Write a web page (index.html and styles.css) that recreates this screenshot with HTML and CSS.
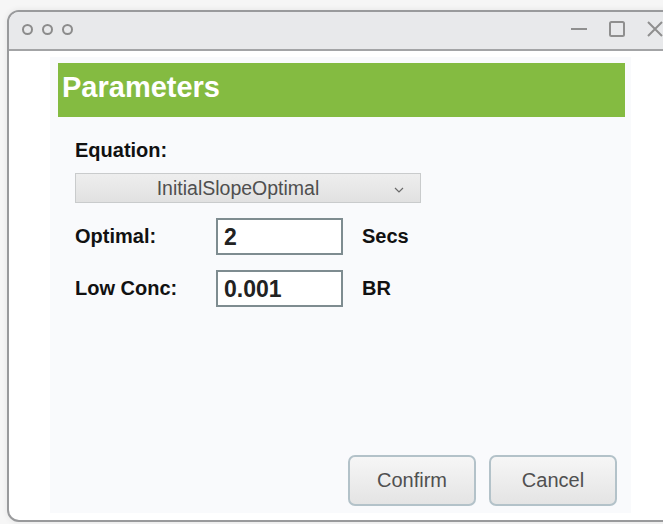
FILE: index.html
```html
<!DOCTYPE html>
<html>
<head>
<meta charset="utf-8">
<link rel="stylesheet" href="styles.css">
</head>
<body>
<div class="window">
  <div class="titlebar">
    <div class="dots">
      <span class="dot"></span><span class="dot"></span><span class="dot"></span>
    </div>
    <div class="controls">
      <svg class="ctl" width="16" height="16" viewBox="0 0 16 16"><line x1="0" y1="8" x2="16" y2="8" stroke="#8f8f8f" stroke-width="2"/></svg>
      <svg class="ctl" width="16" height="16" viewBox="0 0 16 16"><rect x="1" y="1" width="14" height="14" rx="1.5" fill="none" stroke="#8f8f8f" stroke-width="2"/></svg>
      <svg class="ctl" width="16" height="16" viewBox="0 0 16 16"><path d="M1 1 L15 15 M15 1 L1 15" stroke="#8f8f8f" stroke-width="2"/></svg>
    </div>
  </div>
  <div class="body">
    <div class="panel">
      <div class="header">Parameters</div>
      <div class="form">
        <div class="label eq">Equation:</div>
        <div class="select">
          <span class="select-text">InitialSlopeOptimal</span>
          <svg class="chev" width="10" height="6" viewBox="0 0 10 6"><path d="M1 1 L5 5 L9 1" fill="none" stroke="#6a6a6a" stroke-width="1.2"/></svg>
        </div>
        <div class="row">
          <div class="label">Optimal:</div>
          <div class="input">2</div>
          <div class="unit">Secs</div>
        </div>
        <div class="row">
          <div class="label">Low Conc:</div>
          <div class="input">0.001</div>
          <div class="unit">BR</div>
        </div>
      </div>
      <div class="actions">
        <button class="btn">Confirm</button>
        <button class="btn">Cancel</button>
      </div>
    </div>
  </div>
</div>
</body>
</html>
```
FILE: styles.css
```css
html, body {
  margin: 0;
  padding: 0;
  background: #f6f6f6;
  width: 663px;
  height: 524px;
  overflow: hidden;
  font-family: "Liberation Sans", Arial, sans-serif;
}

/* desktop window frame; its right side runs off the visible area */
.window {
  margin: 10px 0 0 7px;
  width: 690px;
  height: 508px;
  border: 2px solid #999a9c;
  border-radius: 12px;
  background: #ffffff;
  box-shadow: 0 0 6px rgba(0,0,0,0.08);
  display: flex;
  flex-direction: column;
  overflow: hidden;
}

.titlebar {
  height: 37px;
  flex: none;
  background: #e8e9eb;
  border-bottom: 2px solid #a3a4a6;
  display: flex;
  align-items: center;
  justify-content: space-between;
}

.dots {
  display: flex;
  gap: 9px;
  padding-left: 13px;
  margin-top: -3px;
}

.dot {
  width: 7px;
  height: 7px;
  border: 2px solid #8c8c8c;
  border-radius: 50%;
}

.controls {
  display: flex;
  align-items: center;
  gap: 22px;
  padding-right: 36px;
  margin-top: -3px;
}

.ctl {
  display: block;
}

.body {
  flex: 1;
  padding: 6px 0 7px 41px;
  display: flex;
}

.panel {
  width: 567px;
  background: #f9fafc;
  padding: 6px 6px 7px 8px;
  display: flex;
  flex-direction: column;
}

.header {
  height: 54px;
  background: #84bb41;
  color: #ffffff;
  font-weight: bold;
  font-size: 29px;
  line-height: 48px;
  padding-left: 4px;
  box-sizing: border-box;
}

.form {
  padding: 21px 0 0 17px;
  display: flex;
  flex-direction: column;
}

.label {
  font-weight: bold;
  font-size: 20px;
  color: #111;
  width: 141px;
}

.eq {
  height: 24px;
  line-height: 24px;
}

.select {
  margin-top: 11px;
  width: 344px;
  height: 28px;
  border: 1px solid #c9cbcc;
  background: linear-gradient(#eeeeee, #e1e1e1);
  display: flex;
  align-items: center;
  position: relative;
}

.select-text {
  flex: 1;
  text-align: center;
  font-size: 19.5px;
  color: #4f4f4f;
  padding-right: 20px;
}

.chev {
  position: absolute;
  right: 16px;
  top: 13px;
}

.row {
  display: flex;
  align-items: center;
  margin-top: 15px;
}

.input {
  width: 117px;
  height: 33px;
  border: 2px solid #7e8c90;
  background: #fff;
  font-weight: bold;
  font-size: 23px;
  color: #222;
  line-height: 34px;
  padding-left: 6px;
}

.unit {
  font-weight: bold;
  font-size: 20px;
  color: #111;
  margin-left: 19px;
}

.actions {
  margin-top: auto;
  display: flex;
  justify-content: flex-end;
  gap: 13px;
  padding-right: 8px;
}

.btn {
  width: 128px;
  height: 51px;
  border: 2px solid #b3c2c9;
  border-radius: 7px;
  background: linear-gradient(#f6f6f6, #e4e4e4);
  font-family: "Liberation Sans", Arial, sans-serif;
  font-size: 20px;
  color: #505050;
}
```
